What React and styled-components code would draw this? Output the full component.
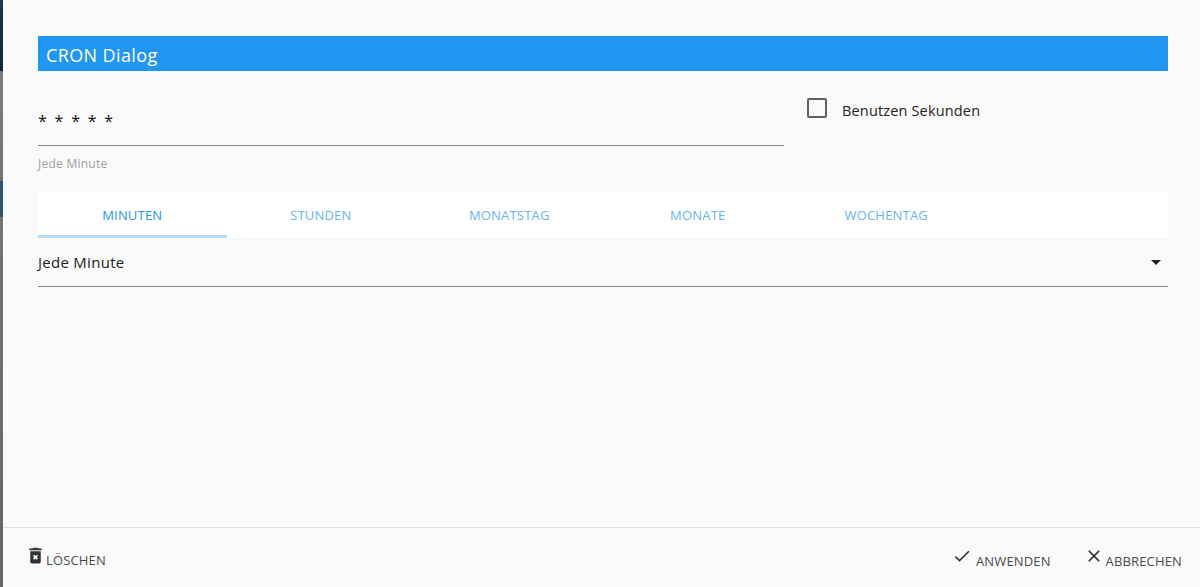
import React from "react";
import styled, { createGlobalStyle } from "styled-components";

const Global = createGlobalStyle`
  html, body { margin: 0; padding: 0; height: 100%; overflow: hidden; }
  body { font-family: "Open Sans", "Noto Sans", sans-serif; background: #808080; }
  #root { height: 100%; }
`;

const Page = styled.div`
  display: flex;
  width: 1200px;
  height: 587px;
`;

const Backdrop = styled.div`
  width: 3px;
  flex: none;
  background: linear-gradient(
    to bottom,
    #1b3650 0, #12263a 71px,
    #7c7c7c 71px, #747474 181px,
    #2a5578 181px, #2a5578 217px,
    #747474 217px, #666 587px
  );
`;

const Dialog = styled.div`
  flex: 1;
  display: flex;
  flex-direction: column;
  background: #fafafa;
`;

const Content = styled.div`
  flex: 1;
  padding: 36px 32px 0 35px;
`;

const Title = styled.h2`
  margin: 0;
  height: 35px;
  line-height: 38px;
  padding-left: 8px;
  background: #2196f3;
  color: #fff;
  font-size: 18px;
  font-weight: 400;
  letter-spacing: 0.38px;
`;

const Top = styled.div`
  display: flex;
  align-items: flex-start;
  margin-top: 16px;
  height: 104px;
`;

const Field = styled.div`
  width: 746px;
  flex: none;
`;

const Expr = styled.div`
  height: 37px;
  padding-top: 21px;
  border-bottom: 1px solid #8a8a8a;
  font-size: 16px;
  line-height: 26px;
  color: #111;
  letter-spacing: 1.8px;
`;

const Helper = styled.div`
  margin-top: 10px;
  font-size: 12px;
  line-height: 15px;
  color: #9e9e9e;
  letter-spacing: 0.25px;
`;

const CheckRow = styled.label`
  display: flex;
  align-items: flex-start;
  margin-left: 23px;
  margin-top: 11px;
  font-size: 14.5px;
  line-height: 20px;
  color: #222;
  letter-spacing: 0.16px;
`;

const Box = styled.span`
  width: 16px;
  height: 16px;
  border: 2px solid #616161;
  border-radius: 2px;
  margin-right: 15px;
`;

const CheckText = styled.span`
  padding-top: 3px;
`;

const Tabs = styled.div`
  display: flex;
  height: 47px;
  background: #fff;
`;

const Tab = styled.div`
  width: 188.5px;
  box-sizing: border-box;
  display: flex;
  align-items: center;
  justify-content: center;
  padding-top: 3px;
  font-size: 13px;
  letter-spacing: 0.2px;
  color: ${(p) => (p.$active ? "#2196f3" : "#64b5f6")};
  border-bottom: 3px solid ${(p) => (p.$active ? "#b3dbfb" : "transparent")};
`;

const Select = styled.div`
  display: flex;
  align-items: center;
  justify-content: space-between;
  height: 48px;
  border-bottom: 1px solid #8a8a8a;
  font-size: 15px;
  letter-spacing: 0.28px;
  color: #1c1c1c;
`;

const Arrow = styled.svg`
  width: 24px;
  height: 24px;
  fill: #212121;
`;

const Footer = styled.div`
  height: 59px;
  flex: none;
  display: flex;
  align-items: center;
  justify-content: space-between;
  border-top: 1px solid #e0e0e0;
  padding: 0 18px 0 21.5px;
`;

const Group = styled.div`
  display: flex;
  gap: 33px;
`;

const Btn = styled.div`
  display: flex;
  align-items: flex-start;
  gap: ${(p) => p.$gap}px;
  font-size: 13px;
  line-height: 20px;
  letter-spacing: 0.15px;
  color: #4a4a4a;
`;

const Label = styled.span`
  position: relative;
  top: 3px;
`;

const Ico = styled.svg`
  width: ${(p) => p.$size}px;
  height: ${(p) => p.$size}px;
  fill: #333;
  flex: none;
  position: relative;
  top: -2px;
`;

export default function App() {
  return (
    <Page>
      <Global />
      <Backdrop />
      <Dialog>
        <Content>
          <Title>CRON Dialog</Title>
          <Top>
            <Field>
              <Expr>* * * * *</Expr>
              <Helper>Jede Minute</Helper>
            </Field>
            <CheckRow>
              <Box />
              <CheckText>Benutzen Sekunden</CheckText>
            </CheckRow>
          </Top>
          <Tabs>
            <Tab $active>MINUTEN</Tab>
            <Tab>STUNDEN</Tab>
            <Tab>MONATSTAG</Tab>
            <Tab>MONATE</Tab>
            <Tab>WOCHENTAG</Tab>
          </Tabs>
          <Select>
            <span>Jede Minute</span>
            <Arrow viewBox="0 0 24 24"><path d="M7 10l5 5 5-5z" /></Arrow>
          </Select>
        </Content>
        <Footer>
          <Btn $gap={0.5}>
            <Ico $size={21} viewBox="0 0 24 24"><path d="M15.5 4l-1-1h-5l-1 1H5v2h14V4zM6 7v12c0 1.1.9 2 2 2h8c1.1 0 2-.9 2-2V7H6zm8.9 8.5l-1.4 1.4-1.5-1.5-1.5 1.5-1.4-1.4 1.5-1.5-1.5-1.5 1.4-1.4 1.5 1.5 1.5-1.5 1.4 1.4-1.5 1.5 1.5 1.5z" /></Ico>
            <Label>LÖSCHEN</Label>
          </Btn>
          <Group>
            <Btn $gap={4}>
              <Ico $size={20} viewBox="0 0 24 24"><path d="M9 16.17 4.83 12l-1.42 1.41L9 19 21 7l-1.41-1.41z" /></Ico>
              <Label>ANWENDEN</Label>
            </Btn>
            <Btn $gap={2}>
              <Ico $size={20} viewBox="0 0 24 24"><path d="M19 6.41 17.59 5 12 10.59 6.41 5 5 6.41 10.59 12 5 17.59 6.41 19 12 13.41 17.59 19 19 17.59 13.41 12z" /></Ico>
              <Label>ABBRECHEN</Label>
            </Btn>
          </Group>
        </Footer>
      </Dialog>
    </Page>
  );
}
